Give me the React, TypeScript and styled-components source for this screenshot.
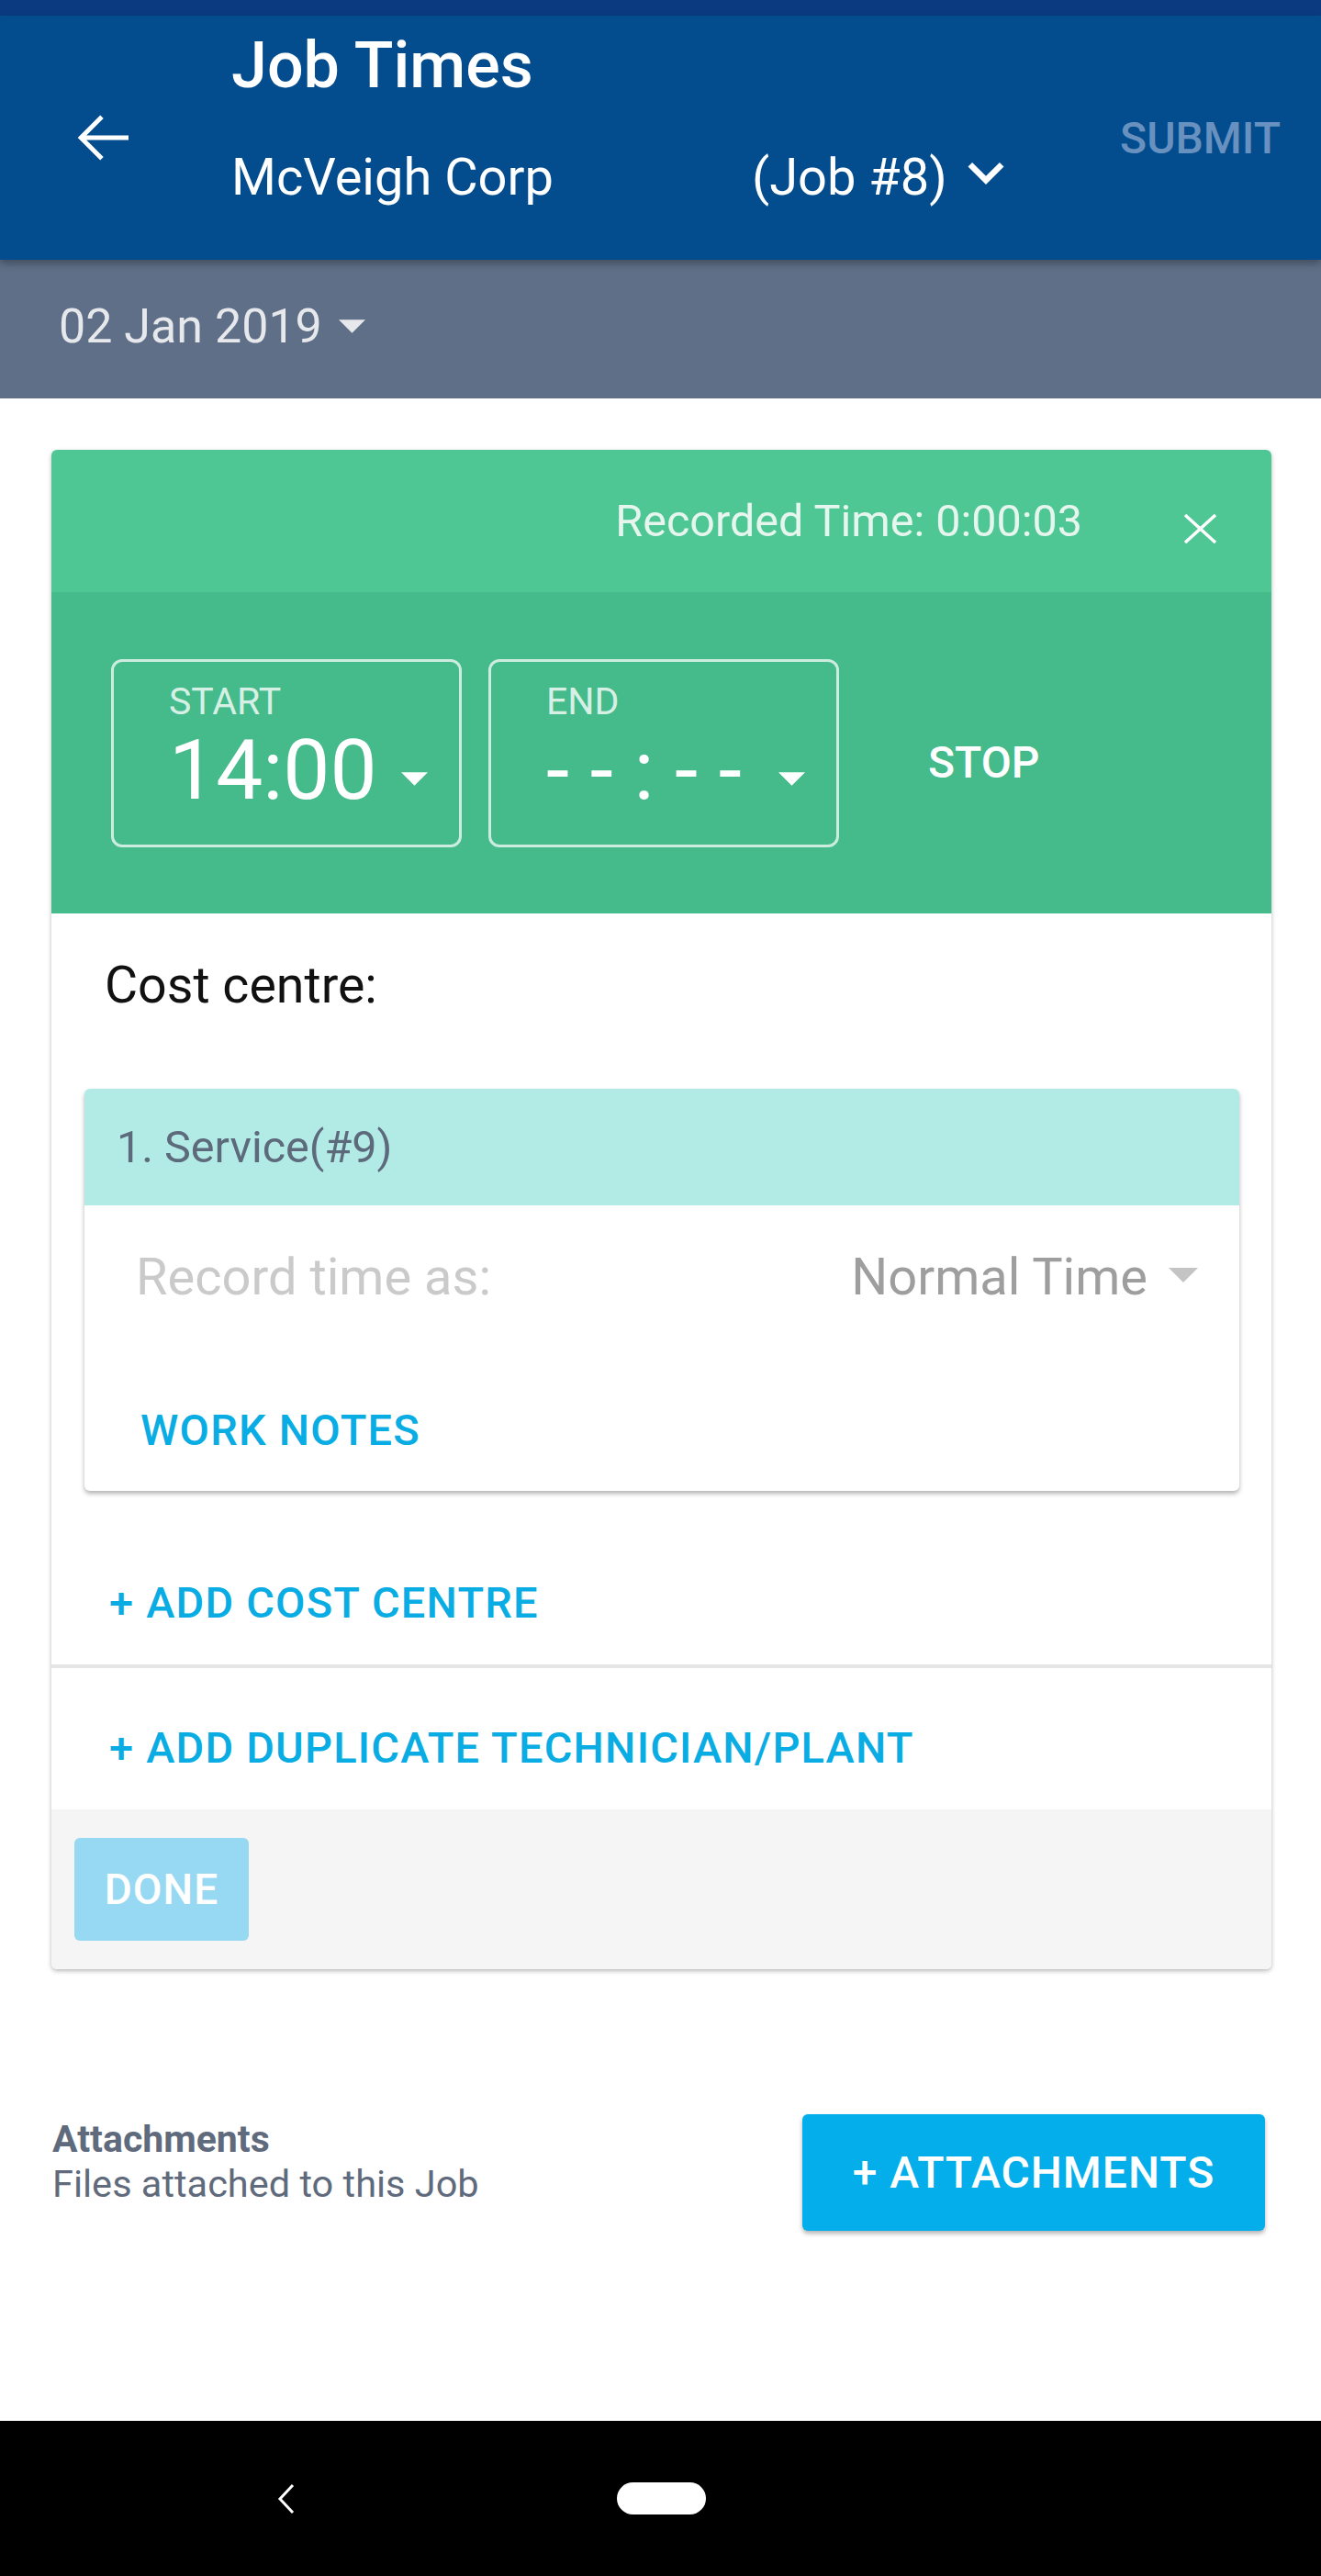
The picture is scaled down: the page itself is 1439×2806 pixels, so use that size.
import React from 'react';
import styled, { createGlobalStyle } from 'styled-components';

const GlobalStyle = createGlobalStyle`
    html, body {
        margin: 0;
        padding: 0;
        background: #ffffff;
    }
    body {
        font-family: Roboto, "Noto Sans", sans-serif;
        -webkit-font-smoothing: antialiased;
    }
    * {
        box-sizing: border-box;
    }
`;

const Screen = styled.div`
    width: 1439px;
    min-height: 2806px;
    display: flex;
    flex-direction: column;
    background: #ffffff;
`;

const StatusBar = styled.div`
    height: 17px;
    background: #0b3a80;
`;

const AppBar = styled.header`
    position: relative;
    z-index: 2;
    height: 266px;
    display: flex;
    align-items: center;
    padding: 0 44px 0 70px;
    background: #034d8f;
    box-shadow: 0 4px 8px rgba(0, 0, 0, 0.3);
`;

const IconButton = styled.button`
    width: 84px;
    height: 84px;
    padding: 0;
    border: none;
    background: none;
    display: flex;
    color: #ffffff;
`;

const TitleBlock = styled.div`
    flex: 1;
    align-self: stretch;
    margin-left: 98px;
    padding-top: 19px;
    color: #ffffff;
`;

const Title = styled.h1`
    margin: 0;
    font-size: 70px;
    line-height: 70px;
    font-weight: 500;
`;

const SubRow = styled.div`
    margin-top: 59px;
    display: grid;
    grid-template-columns: 567px auto;
    align-items: start;
    font-size: 56px;
    line-height: 56px;
`;

const JobSelect = styled.div`
    display: flex;
    align-items: flex-start;
`;

const Chevron = styled.svg`
    flex: none;
    margin: -16px 0 -6px 3px;
`;

const SubmitText = styled.span`
    font-size: 48px;
    font-weight: 500;
    color: #6991bf;
`;

const DateBar = styled.div`
    height: 151px;
    display: flex;
    align-items: flex-start;
    padding: 47px 0 0 64px;
    background: #5e6f87;
    color: #e6e8ec;
    font-size: 52px;
    line-height: 52px;
`;

const Caret = styled.svg<{ $top: number; $gap?: string }>`
    flex: none;
    margin-top: ${p => p.$top}px;
    margin-left: ${p => p.$gap ?? '18px'};
`;

const Card = styled.section`
    margin: 56px 54px 0 56px;
    border-radius: 6px;
    background: #ffffff;
    box-shadow: 0 2px 5px rgba(0, 0, 0, 0.28);
    overflow: hidden;
`;

const TimerHead = styled.div`
    height: 155px;
    display: flex;
    align-items: center;
    justify-content: flex-end;
    padding-right: 59px;
    background: #4ec795;
    color: #e6f6ee;
    font-size: 48.5px;
    line-height: 48px;
`;

const CloseIcon = styled.svg`
    margin-left: 110px;
    margin-top: 17px;
`;

const TimerBody = styled.div`
    height: 350px;
    display: flex;
    align-items: center;
    gap: 29px;
    padding-left: 65px;
    background: #45bb8b;
`;

const TimeBox = styled.div`
    width: 382px;
    height: 205px;
    border: 3px solid rgba(255, 255, 255, 0.72);
    border-radius: 12px;
    padding: 23px 34px 0 60px;
`;

const TimeLabel = styled.div`
    font-size: 41px;
    line-height: 41px;
    color: rgba(255, 255, 255, 0.8);
`;

const TimeValueRow = styled.div`
    display: flex;
    align-items: flex-start;
    margin-top: 9px;
    font-size: 91px;
    line-height: 91px;
    color: #ffffff;
    white-space: pre;
`;

const StopButton = styled.span`
    margin-left: 68px;
    margin-top: 20px;
    font-size: 48px;
    font-weight: 500;
    color: #ffffff;
`;

const CostSection = styled.div`
    padding: 51px 0 0 58px;
    font-size: 55.5px;
    line-height: 55px;
    color: #111111;
`;

const CostItem = styled.div`
    margin: 85px 35px 0 36px;
    border-radius: 6px;
    background: #ffffff;
    box-shadow: 0 3px 5px rgba(0, 0, 0, 0.3);
    overflow: hidden;
`;

const ItemHead = styled.div`
    height: 127px;
    display: flex;
    align-items: center;
    padding-left: 35px;
    background: #b2ebe5;
    color: #5d6a7b;
    font-size: 48.5px;
`;

const ItemBody = styled.div`
    height: 311px;
    padding: 50px 44px 0 56px;
`;

const RecordRow = styled.div`
    display: flex;
    justify-content: space-between;
    align-items: flex-start;
    font-size: 56px;
    line-height: 56px;
`;

const RecordLabel = styled.span`
    color: #cacaca;
`;

const RecordSelect = styled.div`
    display: flex;
    align-items: flex-start;
    color: #9e9e9e;
`;

const LinkText = styled.div<{ $indent?: number }>`
    margin-left: ${p => p.$indent ?? 0}px;
    font-size: 47px;
    line-height: 46px;
    font-weight: 500;
    letter-spacing: 1.2px;
    color: #0aace4;
`;

const WorkNotes = styled(LinkText)`
    margin-top: 116px;
`;

const ActionRow = styled.div<{ $height: number; $top: number; $divider?: boolean }>`
    height: ${p => p.$height}px;
    padding: ${p => p.$top}px 0 0 63px;
    border-bottom: ${p => (p.$divider ? '4px solid #e6e6e6' : 'none')};
`;

const CardFooter = styled.div`
    height: 174px;
    padding: 31px 0 0 25px;
    background: #f5f5f5;
`;

const DoneButton = styled.button`
    width: 190px;
    height: 112px;
    border: none;
    border-radius: 6px;
    background: #97d9f3;
    color: #ffffff;
    font-family: Roboto, sans-serif;
    font-size: 46px;
    font-weight: 500;
    letter-spacing: 1px;
`;

const AttachRow = styled.div`
    margin-top: 158px;
    display: flex;
    justify-content: space-between;
    align-items: flex-start;
    padding: 0 61px 0 57px;
    color: #5f6b7c;
`;

const AttachText = styled.div`
    margin-top: 7px;
`;

const AttachTitle = styled.div`
    font-size: 41px;
    line-height: 41px;
    font-weight: 700;
`;

const AttachSub = styled.div`
    margin-top: 7px;
    font-size: 41.5px;
    line-height: 42px;
`;

const AttachButton = styled.button`
    width: 504px;
    height: 127px;
    border: none;
    border-radius: 6px;
    background: #03aeea;
    color: #ffffff;
    font-family: Roboto, sans-serif;
    font-size: 48px;
    font-weight: 500;
    letter-spacing: 1px;
    box-shadow: 0 3px 5px rgba(0, 0, 0, 0.3);
`;

const NavBar = styled.nav`
    margin-top: auto;
    height: 169px;
    display: flex;
    align-items: center;
    padding-left: 301px;
    background: #000000;
`;

const HomePill = styled.div`
    width: 97px;
    height: 35px;
    margin-left: 351px;
    border-radius: 18px;
    background: #ffffff;
`;

const DropTriangle = ({ w, h, top, gap, color }: { w: number; h: number; top: number; gap?: string; color: string }) => (
    <Caret $top={top} $gap={gap} width={w} height={h} viewBox="0 0 10 5">
        <path d="M0 0h10L5 5z" fill={color} />
    </Caret>
);

export default function App() {
    return (
        <Screen>
            <GlobalStyle />
            <StatusBar />
            <AppBar>
                <IconButton aria-label="Back">
                    <svg width="84" height="84" viewBox="0 0 24 24">
                        <path d="M20 11.3H6.9l5.3-5.3-1-1L4.2 12l7 7 1-1-5.3-5.3H20z" fill="#ffffff" />
                    </svg>
                </IconButton>
                <TitleBlock>
                    <Title>Job Times</Title>
                    <SubRow>
                        <span>McVeigh Corp</span>
                        <JobSelect>
                            <span>(Job #8)</span>
                            <Chevron width="78" height="78" viewBox="0 0 24 24">
                                <path d="M16.59 8.59L12 13.17 7.41 8.59 6 10l6 6 6-6z" fill="#ffffff" />
                            </Chevron>
                        </JobSelect>
                    </SubRow>
                </TitleBlock>
                <SubmitText>SUBMIT</SubmitText>
            </AppBar>

            <DateBar>
                <span>02 Jan 2019</span>
                <DropTriangle w={29} h={15} top={18} color="#e6e8ec" />
            </DateBar>

            <Card>
                <TimerHead>
                    <span>Recorded Time: 0:00:03</span>
                    <CloseIcon width="37" height="32" viewBox="0 0 37 32">
                        <path d="M2 1L35 31M35 1L2 31" stroke="#ffffff" strokeWidth="3.5" />
                    </CloseIcon>
                </TimerHead>
                <TimerBody>
                    <TimeBox>
                        <TimeLabel>START</TimeLabel>
                        <TimeValueRow>
                            <span>14:00</span>
                            <DropTriangle w={29} h={15} top={47} gap="auto" color="#ffffff" />
                        </TimeValueRow>
                    </TimeBox>
                    <TimeBox>
                        <TimeLabel>END</TimeLabel>
                        <TimeValueRow>
                            <span>- - : - -</span>
                            <DropTriangle w={29} h={15} top={47} gap="auto" color="#ffffff" />
                        </TimeValueRow>
                    </TimeBox>
                    <StopButton>STOP</StopButton>
                </TimerBody>

                <CostSection>Cost centre:</CostSection>
                <CostItem>
                    <ItemHead>1. Service(#9)</ItemHead>
                    <ItemBody>
                        <RecordRow>
                            <RecordLabel>Record time as:</RecordLabel>
                            <RecordSelect>
                                <span>Normal Time</span>
                                <DropTriangle w={34} h={16} top={18} gap="22px" color="#c4c4c4" />
                            </RecordSelect>
                        </RecordRow>
                        <WorkNotes $indent={5}>WORK NOTES</WorkNotes>
                    </ItemBody>
                </CostItem>

                <ActionRow $height={193} $top={99} $divider>
                    <LinkText>+ ADD COST CENTRE</LinkText>
                </ActionRow>
                <ActionRow $height={154} $top={64}>
                    <LinkText>+ ADD DUPLICATE TECHNICIAN/PLANT</LinkText>
                </ActionRow>
                <CardFooter>
                    <DoneButton>DONE</DoneButton>
                </CardFooter>
            </Card>

            <AttachRow>
                <AttachText>
                    <AttachTitle>Attachments</AttachTitle>
                    <AttachSub>Files attached to this Job</AttachSub>
                </AttachText>
                <AttachButton>+ ATTACHMENTS</AttachButton>
            </AttachRow>

            <NavBar>
                <svg width="20" height="34" viewBox="0 0 20 34">
                    <path d="M18 2L4 17l14 15" fill="none" stroke="#ffffff" strokeWidth="3" />
                </svg>
                <HomePill />
            </NavBar>
        </Screen>
    );
}
